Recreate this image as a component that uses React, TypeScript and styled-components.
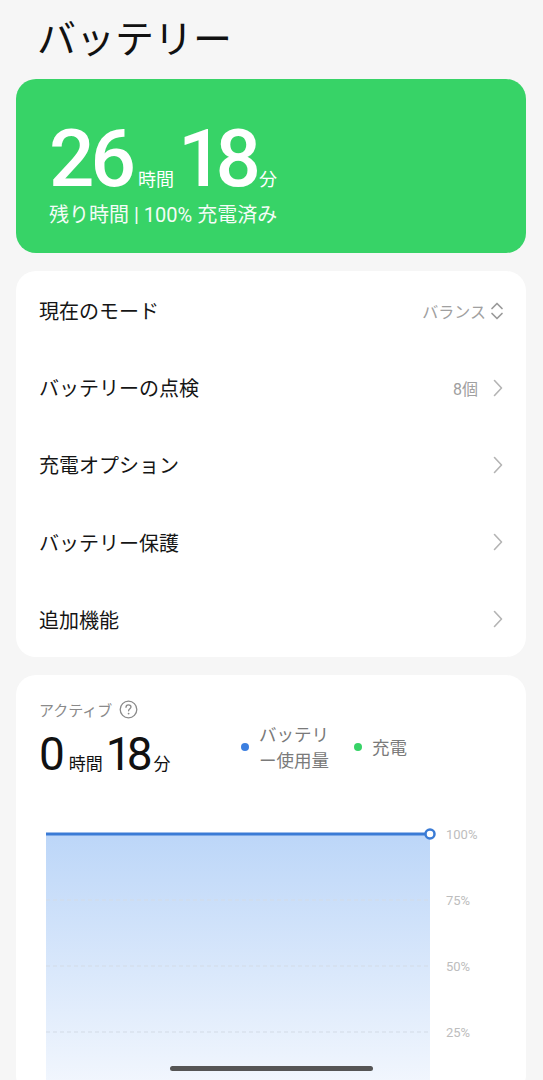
import styled, { createGlobalStyle } from "styled-components";

const GlobalStyle = createGlobalStyle`
  html, body {
    margin: 0;
    padding: 0;
    background: #f6f6f6;
  }
  body {
    font-family: Roboto, "Noto Sans CJK JP", sans-serif;
    -webkit-font-smoothing: antialiased;
  }
`;

const Page = styled.div`
  width: 543px;
  height: 1080px;
  overflow: hidden;
  position: relative;
  background: #f6f6f6;
  box-sizing: border-box;
  padding: 0 17px 0 16px;
`;

const Title = styled.h1`
  margin: 0;
  padding: 12px 0 0 21px;
  height: 79px;
  box-sizing: border-box;
  font-size: 39px;
  font-weight: 400;
  line-height: 48px;
  color: #111;
  font-family: "Noto Sans CJK JP", sans-serif;
`;

const GreenCard = styled.section`
  background: #37d367;
  border-radius: 20px;
  height: 174px;
  box-sizing: border-box;
  padding: 40px 0 0 33px;
  color: #fff;
`;

const BigTime = styled.div`
  display: flex;
  align-items: baseline;
  height: 84px;
`;

const BigNum = styled.span<{ $size: number; $track: number; $weight: number }>`
  font-family: Roboto, sans-serif;
  font-size: ${({ $size }) => $size}px;
  line-height: 1;
  font-weight: ${({ $weight }) => $weight};
  letter-spacing: ${({ $track }) => $track}px;
`;

const Unit = styled.span<{ $size: number; $gap: number; $lead: number }>`
  font-family: "Noto Sans CJK JP", sans-serif;
  font-size: ${({ $size }) => $size}px;
  margin: 0 ${({ $gap }) => $gap}px 0 ${({ $lead }) => $lead}px;
`;

const SubLine = styled.div`
  font-family: Roboto, "Noto Sans CJK JP", sans-serif;
  font-size: 20px;
  line-height: 24px;
  opacity: 0.95;
`;

const Card = styled.section`
  background: #fff;
  border-radius: 20px;
  margin-top: 18px;
`;

const Row = styled.div`
  height: 77.2px;
  display: flex;
  align-items: center;
  justify-content: space-between;
  padding: 2px 22px 0 23px;
  box-sizing: border-box;
`;

const RowLabel = styled.span`
  font-family: "Noto Sans CJK JP", sans-serif;
  font-size: 20px;
  color: #151515;
`;

const RowValue = styled.span`
  display: flex;
  align-items: center;
  gap: 6px;
  font-family: Roboto, "Noto Sans CJK JP", sans-serif;
  font-size: 16px;
  color: #a0a0a0;
`;

const ValueText = styled.span<{ $after: number }>`
  margin-right: ${({ $after }) => $after}px;
`;

const ChartCard = styled(Card)`
  height: 420px;
  padding: 24px 0 0 0;
  box-sizing: border-box;
`;

const ActiveHead = styled.div`
  display: flex;
  align-items: center;
  gap: 7px;
  padding-left: 23px;
  font-family: "Noto Sans CJK JP", sans-serif;
  font-size: 15px;
  color: #8a8a8a;
  height: 22px;
`;

const SummaryRow = styled.div`
  display: flex;
  align-items: center;
  padding: 0 0 0 23px;
  height: 52px;
`;

const SmallTime = styled.div`
  display: flex;
  align-items: baseline;
  color: #111;
  width: 202px;
  margin-top: 14px;
`;

const Legend = styled.div`
  display: flex;
  align-items: center;
  gap: 25px;
  font-family: "Noto Sans CJK JP", sans-serif;
  font-size: 17.5px;
  line-height: 26px;
  color: #7a7a7a;
`;

const LegendItem = styled.div`
  display: flex;
  align-items: center;
  gap: 10px;
`;

const Dot = styled.span<{ $color: string }>`
  width: 8px;
  height: 8px;
  border-radius: 50%;
  background: ${({ $color }) => $color};
  flex-shrink: 0;
`;

const Chart = styled.svg`
  display: block;
  margin-top: 51px;
`;

const HomeBar = styled.div`
  position: absolute;
  left: 170px;
  bottom: 9px;
  width: 203px;
  height: 5px;
  border-radius: 3px;
  background: #555;
`;

const Chevron = () => (
  <svg width="12" height="20" viewBox="0 0 12 20">
    <path d="M2.5 2.5 L9.5 10 L2.5 17.5" fill="none" stroke="#b4b4b4" strokeWidth="1.6" strokeLinecap="round" strokeLinejoin="round" />
  </svg>
);

const UpDown = () => (
  <svg width="14" height="20" viewBox="0 0 14 20">
    <path d="M2 7.5 L7 2.5 L12 7.5 M2 12.5 L7 17.5 L12 12.5" fill="none" stroke="#9a9a9a" strokeWidth="1.7" strokeLinecap="round" strokeLinejoin="round" />
  </svg>
);

const HelpIcon = () => (
  <svg width="19" height="19" viewBox="0 0 19 19">
    <circle cx="9.5" cy="9.5" r="8.3" fill="none" stroke="#8a8a8a" strokeWidth="1.3" />
    <path d="M7 7.3 C7 5.6 8.2 4.8 9.5 4.8 C10.9 4.8 12 5.7 12 7 C12 8.6 9.6 8.9 9.6 10.8" fill="none" stroke="#8a8a8a" strokeWidth="1.3" strokeLinecap="round" />
    <circle cx="9.6" cy="13.6" r="0.9" fill="#8a8a8a" />
  </svg>
);

const rows = [
  { label: "現在のモード", value: "バランス", icon: "updown" },
  { label: "バッテリーの点検", value: "8個", icon: "chevron" },
  { label: "充電オプション", value: "", icon: "chevron" },
  { label: "バッテリー保護", value: "", icon: "chevron" },
  { label: "追加機能", value: "", icon: "chevron" },
];

// chart top line sits at y=10 inside the svg
const TOP = 10;
const gridLines = [
  { y: TOP + 66, label: "75%" },
  { y: TOP + 132, label: "50%" },
  { y: TOP + 198, label: "25%" },
];

export default function App() {
  return (
    <Page>
      <GlobalStyle />
      <Title>バッテリー</Title>
      <GreenCard>
        <BigTime>
          <BigNum $size={80} $track={-4} $weight={500}>26</BigNum>
          <Unit $size={18} $gap={4} $lead={6}>時間</Unit>
          <BigNum $size={80} $track={-8} $weight={500}>18</BigNum>
          <Unit $size={18} $gap={0} $lead={6}>分</Unit>
        </BigTime>
        <SubLine>残り時間 | 100% 充電済み</SubLine>
      </GreenCard>

      <Card>
        {rows.map((r) => (
          <Row key={r.label}>
            <RowLabel>{r.label}</RowLabel>
            <RowValue>
              {r.value && <ValueText $after={r.icon === "chevron" ? 8 : -2}>{r.value}</ValueText>}
              {r.icon === "updown" ? <UpDown /> : <Chevron />}
            </RowValue>
          </Row>
        ))}
      </Card>

      <ChartCard>
        <ActiveHead>
          アクティブ <HelpIcon />
        </ActiveHead>
        <SummaryRow>
          <SmallTime>
            <BigNum $size={46} $track={-1} $weight={400}>0</BigNum>
            <Unit $size={17} $gap={3} $lead={5}>時間</Unit>
            <BigNum $size={46} $track={-5} $weight={400}>18</BigNum>
            <Unit $size={17} $gap={0} $lead={6}>分</Unit>
          </SmallTime>
          <Legend>
            <LegendItem>
              <Dot $color="#3c7fe0" />
              <span>
                バッテリ
                <br />
                ー使用量
              </span>
            </LegendItem>
            <LegendItem>
              <Dot $color="#37d367" />
              <span>充電</span>
            </LegendItem>
          </Legend>
        </SummaryRow>
        <Chart width="510" height="280" viewBox="0 0 510 280">
          <defs>
            <linearGradient id="fill" x1="0" y1="0" x2="0" y2="1">
              <stop offset="0" stopColor="#bcd6f8" />
              <stop offset="1" stopColor="#f6f9fe" />
            </linearGradient>
          </defs>
          <rect x="30" y={TOP} width="384" height={280 - TOP} fill="url(#fill)" />
          {gridLines.map((g) => (
            <g key={g.label}>
              <line x1="30" x2="414" y1={g.y} y2={g.y} stroke="#d3dbe6" strokeWidth="1" strokeDasharray="4 3" />
              <text x="430" y={g.y + 5} fontSize="13" fill="#bdbdbd" fontFamily="Roboto, sans-serif">
                {g.label}
              </text>
            </g>
          ))}
          <line x1="30" x2="414" y1={TOP} y2={TOP} stroke="#3a7bd5" strokeWidth="3" />
          <circle cx="414" cy={TOP} r="4.5" fill="#fff" stroke="#3a7bd5" strokeWidth="2.5" />
          <text x="430" y={TOP + 5} fontSize="13" fill="#bdbdbd" fontFamily="Roboto, sans-serif">
            100%
          </text>
        </Chart>
      </ChartCard>
      <HomeBar />
    </Page>
  );
}
